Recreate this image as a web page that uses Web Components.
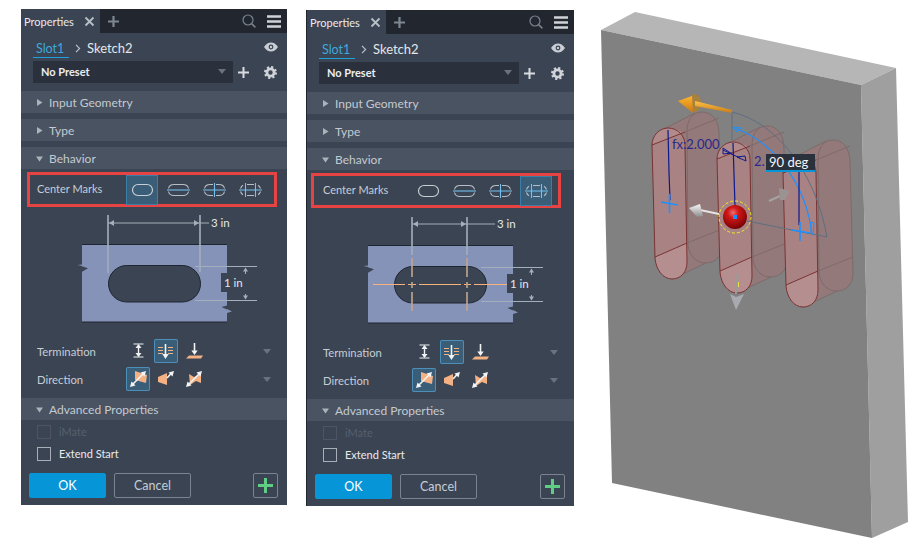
<!DOCTYPE html>
<html>
<head>
<meta charset="utf-8">
<style>
  html, body { margin: 0; background: #fff; }
  body { font-family: "Lato", "Liberation Sans", sans-serif; }
  .page { display: flex; align-items: flex-start; padding-left: 21px; width: 897px; height: 548px; overflow: hidden; }
</style>
</head>
<body>
<div class="page">
  <prop-panel style="width:266px;margin-top:9px">
    <tab-bar></tab-bar>
    <crumb-row></crumb-row>
    <preset-row></preset-row>
    <sect-head>Input Geometry</sect-head>
    <sect-head>Type</sect-head>
    <sect-head open>Behavior</sect-head>
    <mark-row selected="0"></mark-row>
    <slot-figure></slot-figure>
    <icon-row label="Termination" kind="term" selected="1"></icon-row>
    <icon-row label="Direction" kind="dir" selected="0"></icon-row>
    <sect-head open style="margin-top:3px">Advanced Properties</sect-head>
    <check-row disabled>iMate</check-row>
    <check-row>Extend Start</check-row>
    <foot-bar></foot-bar>
  </prop-panel>
  <prop-panel style="width:268px;margin:10px 0 0 19px;border-left:1px solid #20252d;box-sizing:border-box;--mark-shift:-2px;">
    <tab-bar></tab-bar>
    <crumb-row></crumb-row>
    <preset-row></preset-row>
    <sect-head>Input Geometry</sect-head>
    <sect-head>Type</sect-head>
    <sect-head open>Behavior</sect-head>
    <mark-row selected="3"></mark-row>
    <slot-figure marks></slot-figure>
    <icon-row label="Termination" kind="term" selected="1"></icon-row>
    <icon-row label="Direction" kind="dir" selected="0"></icon-row>
    <sect-head open style="margin-top:3px">Advanced Properties</sect-head>
    <check-row disabled>iMate</check-row>
    <check-row>Extend Start</check-row>
    <foot-bar></foot-bar>
  </prop-panel>
  <model-view></model-view>
</div>

<script>
  const PLUS = (c, w) => `<path d="M6.5 1v11M1 6.5h11" stroke="${c}" stroke-width="${w}" fill="none"/>`;

  class PropPanel extends HTMLElement {
    constructor() {
      super();
      this.attachShadow({ mode: 'open' });
      this.shadowRoot.innerHTML = `
        <style>
          :host {
            display: flex;
            flex-direction: column;
            flex: none;
            height: 496px;
            background: #3b4453;
            color: #c6cdd5;
            font: 12px "Lato", "Liberation Sans", sans-serif;
          }
          ::slotted(*) { flex: none; }
        </style>
        <slot></slot>`;
    }
  }

  class TabBar extends HTMLElement {
    constructor() {
      super();
      this.attachShadow({ mode: 'open' });
      this.shadowRoot.innerHTML = `
        <style>
          :host { display: flex; align-items: center; height: 24px; background: #22272f; }
          .tab { display: flex; align-items: center; width: 79px; height: 100%; background: #3b4453; box-sizing: border-box; padding-left: 3px; color: #e8ebee; font-size: 11px; }
          .tab svg { margin-left: 10px; }
          .add { margin-left: 7px; }
          .right { margin-left: auto; display: flex; align-items: center; gap: 11px; padding-right: 6px; }
          svg { display: block; }
        </style>
        <div class="tab">Properties
          <svg width="11" height="11" viewBox="0 0 11 11"><path d="M1.5 1.5l8 8M9.5 1.5l-8 8" stroke="#b9bfc7" stroke-width="1.8"/></svg>
        </div>
        <svg class="add" width="13" height="13" viewBox="0 0 13 13">${PLUS('#7d8692', 2.2)}</svg>
        <div class="right">
          <svg width="14" height="14" viewBox="0 0 14 14"><circle cx="6" cy="6" r="5" fill="none" stroke="#7b838e" stroke-width="1.2"/><path d="M9.6 9.6l3.8 3.8" stroke="#7b838e" stroke-width="1.5"/></svg>
          <svg width="14" height="13" viewBox="0 0 14 13"><path d="M0 1.5h14M0 6.5h14M0 11.5h14" stroke="#cfd3d8" stroke-width="2.4"/></svg>
        </div>`;
    }
  }

  class CrumbRow extends HTMLElement {
    constructor() {
      super();
      this.attachShadow({ mode: 'open' });
      this.shadowRoot.innerHTML = `
        <style>
          :host { display: flex; align-items: center; height: 28px; padding-left: 12px; font-size: 12.5px; color: #e4e7ea; }
          .link { color: #3ea8dc; padding: 0 6px 0 3px; width: 27px; border-bottom: 1px solid #1fa0de; line-height: 16px; margin-top: 4px; }
          svg { display: block; }
          .sep { margin: 2px 6px 0 6px; }
          .now { font-size: 13px; margin-top: 2px; }
          .eye { margin-left: auto; margin-right: 9px; }
        </style>
        <span class="link">Slot1</span>
        <svg class="sep" width="6" height="9" viewBox="0 0 6 9"><path d="M1 .8l3.6 3.7L1 8.2" fill="none" stroke="#b9bfc7" stroke-width="1.2"/></svg>
        <span class="now">Sketch2</span>
        <svg class="eye" width="14" height="10" viewBox="0 0 14 10"><path d="M0 5C2 1.8 4.5.5 7 .5S12 1.8 14 5c-2 3.2-4.500 4.500-7 4.500S2 8.200 0 5z" fill="#c9ced4"/><circle cx="7" cy="5" r="2.400" fill="#3b4453"/><circle cx="7" cy="5" r="1.200" fill="#c9ced4"/></svg>`;
    }
  }

  class PresetRow extends HTMLElement {
    constructor() {
      super();
      this.attachShadow({ mode: 'open' });
      this.shadowRoot.innerHTML = `
        <style>
          :host { display: flex; align-items: center; height: 22px; padding-left: 12px; margin-bottom: 8px; }
          .sel { display: flex; align-items: center; width: 200px; height: 100%; box-sizing: border-box; padding: 0 7px 2px 8px; background: #2a303c; color: #eceef0; font-size: 11px; font-weight: 700; }
          .sel i { margin-left: auto; width: 0; height: 0; border: 4px solid transparent; border-top: 5px solid #69727f; border-bottom: 0; }
          svg { display: block; }
          .plus { margin-left: 4px; }
          .gear { margin-left: auto; margin-right: 10px; }
        </style>
        <div class="sel">No Preset<i></i></div>
        <svg class="plus" width="13" height="13" viewBox="0 0 13 13">${PLUS('#d8dbdf', 2)}</svg>
        <svg class="gear" width="13" height="13" viewBox="0 0 13 13"><circle cx="6.500" cy="6.500" r="3.600" fill="none" stroke="#d0d4d9" stroke-width="2.800"/><circle cx="6.500" cy="6.500" r="5.300" fill="none" stroke="#d0d4d9" stroke-width="2.400" stroke-dasharray="2.100 2.060"/></svg>`;
    }
  }

  class SectHead extends HTMLElement {
    constructor() {
      super();
      this.attachShadow({ mode: 'open' });
      const open = this.hasAttribute('open');
      this.shadowRoot.innerHTML = `
        <style>
          :host { display: flex; align-items: center; height: 22px; margin-bottom: 6px; background: #4a5361; padding-left: 15px; color: #c3cad2; font-size: 12px; }
          .arrow { width: 7px; margin-right: 6px; display: block; }
        </style>
        <svg class="arrow" width="7" height="7" viewBox="0 0 7 7"><path d="${open ? 'M0 1.500h7L3.500 6.500z' : 'M1 0l5.500 3.500L1 7z'}" fill="#aab2bb"/></svg>
        <slot></slot>`;
    }
  }

  class MarkRow extends HTMLElement {
    icon(n) {
      const g = '#b8bdc3', b = '#74c0ee';
      const shapes = [
        `<rect x="1.500" y="1.500" width="20" height="11" rx="5.500" fill="none" stroke="#c8cdd2" stroke-width="1.200"/>`,
        `<path d="M1.500 5.500C2 3 4 1.500 7 1.500h9c3 0 5 1.500 5.500 4M1.500 8.500C2 11 4 12.500 7 12.500h9c3 0 5-1.500 5.500-4" fill="none" stroke="${g}" stroke-width="1.100"/><path d="M0 7h23" stroke="${b}" stroke-width="1.100"/>`,
        `<path d="M1.500 5.500C2 3 4 1.500 7 1.500h3M1.500 8.500C2 11 4 12.500 7 12.500h3M13 1.500h3c3 0 5 1.500 5.500 4M13 12.500h3c3 0 5-1.500 5.500-4" fill="none" stroke="${g}" stroke-width="1.100"/><path d="M0 7h23M11.500 0v14" stroke="${b}" stroke-width="1.100"/>`,
        `<path d="M1.500 5.500C2 4 3 2.800 4 2.200M1.500 8.500C2 10 3 11.200 4 11.800M8 1.500h7M8 12.500h7M19 2.200c1 .6 2 1.800 2.500 3.300M19 11.800c1-.6 2-1.800 2.500-3.300" fill="none" stroke="${g}" stroke-width="1.100"/><path d="M0 7h23M6.500 0v14M16.500 0v14" stroke="${b}" stroke-width="1.100"/>`
      ];
      return `<svg width="23" height="14" viewBox="0 0 23 14">${shapes[n]}</svg>`;
    }
    constructor() {
      super();
      this.attachShadow({ mode: 'open' });
      const sel = Number(this.getAttribute('selected'));
      const btns = [0, 1, 2, 3].map(i => `<div class="b ${i === sel ? 'on' : ''}">${this.icon(i)}</div>`).join('');
      this.shadowRoot.innerHTML = `
        <style>
          :host { display: flex; align-items: center; height: 35px; width: 250px; box-sizing: border-box; margin: -3px 0 0 calc(6px + var(--mark-shift, 0px)); border: 3px solid #e84343; padding-left: calc(7px - var(--mark-shift, 0px)); font-size: 11px; color: #c6cdd5; }
          .lbl { width: 89px; flex: none; margin-top: -2px; }
          .row { display: flex; height: 30px; }
          .b { width: 32px; margin-right: 4px; height: 100%; box-sizing: border-box; display: flex; align-items: center; justify-content: center; flex: none; }
          .b.on { background: #3a5d78; box-shadow: inset 0 0 0 1px #3d7ea8; }
          svg { display: block; }
        </style>
        <span class="lbl">Center Marks</span>
        <div class="row">${btns}</div>`;
    }
  }

  class SlotFigure extends HTMLElement {
    constructor() {
      super();
      this.attachShadow({ mode: 'open' });
      const marks = this.hasAttribute('marks');
      const x1 = marks ? 126 : 108, x2 = marks ? 181 : 200;
      const dk = '#1f2530', ln = '#a3afba';
      const extra = marks ? `
        <path d="M87 283.500h32M122 283.500h8M133 283.500h42M178 283.500h7M188 283.500h33" stroke="#f5b27c" stroke-width="1"/>
        <path d="M${x1} 257v19M${x1} 281v6M${x1} 291v19M${x2} 257v19M${x2} 281v6M${x2} 291v19" stroke="#c4a68e" stroke-width="1.600"/>` : '';
      this.shadowRoot.innerHTML = `
        <style>
          :host { display: block; height: 132px; }
          svg { display: block; }
          text { font: 11.500px "Lato", "Liberation Sans", sans-serif; fill: #e4e8ec; }
        </style>
        <svg width="266" height="132" viewBox="21 207 266 132">
          <rect x="82" y="244.500" width="145" height="77.500" fill="#8593b8"/>
          <path d="M82 244.500h145M82 322h145" stroke="${dk}" stroke-width="1"/>
          <path d="M78 265L88 268.300L82 271.700V266z" fill="#3b4453"/>
          <path d="M82 264.500L77.500 265L82 266z" fill="#8593b8"/>
          <path d="M227 305.500L221.500 307L227 309.500z" fill="#3b4453"/>
          <path d="M227 309L232 311.500L227 313z" fill="#8593b8"/>
          <rect x="221" y="273" width="24" height="19" fill="#3b4453"/>
          <rect x="108.500" y="265.500" width="92" height="36.500" rx="18.250" fill="#3b4453" stroke="${dk}"/>
          ${extra}
          <g stroke="${ln}" fill="none">
            <path d="M${x1} ${marks ? '216v38' : '215v58'}M${x2} ${marks ? '216v38' : '215v57'}" stroke-width="2" opacity=".8"/>
            <path d="M${x1} 223H209" stroke-width="1"/>
            <path d="M195 266.500h62M195 300.500h62" stroke-width="1"/>
            <path d="M245.500 268v6M245.500 294v5" stroke-width="1"/>
          </g>
          <path d="M${x1 + 1} 223l5-3v6zM${x2 - 1} 223l-5-3v6zM245.500 267.500l-2.500 4h5zM245.500 299.500l-2.500-4h5z" fill="${ln}"/>
          <text x="211" y="227">3 in</text>
          <text x="224" y="287">1 in</text>
        </svg>`;
    }
  }

  class IconRow extends HTMLElement {
    glyph(kind, n) {
      const o = '#f3b184', w = '#f2f3f5';
      const arrow = (d, a) => `<path d="${d}" stroke="${w}" stroke-width="1.600" fill="none"/><path d="${a}" fill="${w}"/>`;
      if (kind === 'term') {
        return [
          `<path d="M7.500 5h10M7.500 18h10" stroke="${w}" stroke-width="1.200"/><path d="M12.500 6v11" stroke="${w}" stroke-width="1.400"/><path d="M12.500 5l3 4h-6zM12.500 18l3-4h-6z" fill="${w}"/>`,
          `<path d="M4 8.500h5M14 8.500h5M4 11.500h5M14 11.500h5M4 14.500h5M14 14.500h5" stroke="${o}" stroke-width="1.200"/><path d="M11.500 5v11" stroke="${w}" stroke-width="1.600"/><path d="M11.500 20l3.200-5h-6.400z" fill="${w}"/>`,
          `<path d="M12.500 4v9" stroke="${w}" stroke-width="1.600"/><path d="M12.500 16l3.200-4.500h-6.400z" fill="${w}"/><path d="M4 19.500L7 16.500H21L19 19.500z" fill="${o}"/>`
        ][n];
      }
      const two = arrow('M5.500 18.500L18 6', 'M4 20l1.500-5.500 4 4zM20 4l-1.500 5.500-4-4z');
      return [
        `<path d="M9 4L21 8L20 16L9 13z" fill="${o}"/>` + two,
        `<path d="M4 10L13 6V18L4 15z" fill="${o}"/>` + arrow('M13 11L18 5.500', 'M20 4l-1.500 5.500-4-4z'),
        `<path d="M7 7L12 10L19 7V16L14 14L8 18z" fill="${o}"/>` + two
      ][n];
    }
    constructor() {
      super();
      this.attachShadow({ mode: 'open' });
      const kind = this.getAttribute('kind');
      const sel = Number(this.getAttribute('selected'));
      const btns = [0, 1, 2].map(i => `<div class="b ${i === sel ? 'on' : ''}"><svg width="24" height="24" viewBox="0 0 24 24">${this.glyph(kind, i)}</svg></div>`).join('');
      this.shadowRoot.innerHTML = `
        <style>
          :host { display: flex; align-items: center; height: 24px; padding-left: 16px; margin-bottom: 4px; font-size: 11.300px; color: #c6cdd5; }
          .lbl { width: 89px; flex: none; }
          .row { display: flex; gap: 4px; }
          .b { width: 24px; height: 24px; border-radius: 2px; flex: none; }
          .b.on { background: #3a5d78; box-shadow: inset 0 0 0 1px #4d8fb8; }
          svg { display: block; }
          i { margin-left: auto; margin-right: 16px; width: 0; height: 0; border: 4px solid transparent; border-top: 5px solid #69727f; border-bottom: 0; }
        </style>
        <span class="lbl">${this.getAttribute('label')}</span>
        <div class="row">${btns}</div>
        <i></i>`;
    }
  }

  class CheckRow extends HTMLElement {
    constructor() {
      super();
      this.attachShadow({ mode: 'open' });
      this.shadowRoot.innerHTML = `
        <style>
          :host { display: flex; align-items: center; height: 14px; padding-left: 16px; margin-top: 8px; font-size: 11px; color: #e8ebee; }
          :host([disabled]) { margin-top: -1px; color: #566070; }
          .box { width: 14px; height: 14px; box-sizing: border-box; border: 1px solid #a8afb8; margin-right: 8px; }
          .txt { margin-top: -2px; }
          :host([disabled]) .box { border-color: #4c5564; }
        </style>
        <span class="box"></span><span class="txt"><slot></slot></span>`;
    }
  }

  class FootBar extends HTMLElement {
    constructor() {
      super();
      this.attachShadow({ mode: 'open' });
      this.shadowRoot.innerHTML = `
        <style>
          :host { display: flex; height: 25px; margin-top: 12px; padding: 0 9px 0 8px; gap: 8px; }
          .btn { width: 77px; box-sizing: border-box; display: flex; align-items: center; justify-content: center; border-radius: 2px; font-size: 12.500px; border: 1px solid #7a838f; color: #c6cdd5; }
          .ok { background: #0696d7; border-color: #0696d7; color: #fff; }
          .add { margin-left: auto; width: 25px; box-sizing: border-box; border: 1px solid #7a838f; border-radius: 2px; display: flex; align-items: center; justify-content: center; }
          svg { display: block; }
        </style>
        <div class="btn ok">OK</div>
        <div class="btn">Cancel</div>
        <div class="add"><svg width="15" height="15" viewBox="0 0 15 15"><path d="M7.500 0v15M0 7.500h15" stroke="#5fce84" stroke-width="3"/></svg></div>`;
    }
  }

  class ModelView extends HTMLElement {
    slotShape() {
      const edge = '#7a3333', faint = '#7e6a6a';
      const front = 'M652 145C652 135 660 128 668 128C677 128 685 135 685 145L687 262C687 272 681 279 672 279C663 279 656 270 655 258Z';
      const back = 'M687 132C687 120 692 112 702 112C712 112 719 120 719 135L722 245C722 256 716 263 705 263C696 263 689 255 688 245Z';
      return `
        <path d="M660 131L695 113L719 135L722 245L706 263L672 279Z" fill="#94797a"/>
        <path d="${back}" fill="#94797a" stroke="${faint}"/>
        <path d="M660 131L695 113M672 279L706 263" stroke="${faint}" fill="none"/>
        <path d="${front}" fill="#a98384"/>
        <path d="M652 145C652 135 660 128 668 128C677 128 685 135 685 132Z" fill="#b18b8c"/>
        <path d="M655 257L687 243L687 262C687 272 681 279 672 279C663 279 656 270 655 258Z" fill="#b58e8f"/>
        <path d="${front}" fill="none" stroke="${edge}" stroke-width="1"/>
        <path d="M652 145L685 132M655 257L687 243" stroke="${edge}" stroke-width="1" fill="none"/>
        <path d="M685 132L719 118M687 243L722 229" stroke="${faint}" stroke-width="1" fill="none"/>`;
    }
    constructor() {
      super();
      this.attachShadow({ mode: 'open' });
      const nav = '#0c1a8c', sky = '#1e90ff', gray = '#5e6e80';
      this.shadowRoot.innerHTML = `
        <style>
          :host { display: block; flex: none; width: 323px; height: 548px; margin-left: 21px; }
          svg { display: block; }
          .dim { font: 13px "Lato", "Liberation Sans", sans-serif; fill: #28288a; }
          .tip { font: 13px "Lato", "Liberation Sans", sans-serif; fill: #f4f6f8; }
        </style>
        <svg width="323" height="548" viewBox="595 0 323 548">
          <defs>
            <radialGradient id="ball" cx=".42" cy=".32" r=".75"><stop offset="0" stop-color="#f07070"/><stop offset=".3" stop-color="#d01818"/><stop offset=".8" stop-color="#8a0606"/><stop offset="1" stop-color="#5a0404"/></radialGradient>
            <linearGradient id="shaft" x1="0" y1="0" x2="0" y2="1"><stop offset="0" stop-color="#ffc24a"/><stop offset="1" stop-color="#c87c14"/></linearGradient>
            <linearGradient id="tip" x1="0" y1="0" x2="0" y2="1"><stop offset="0" stop-color="#ffb52e"/><stop offset="1" stop-color="#c9770f"/></linearGradient>
            <linearGradient id="cone" x1="0" y1="0" x2="0" y2="1"><stop offset="0" stop-color="#f7f7f7"/><stop offset="1" stop-color="#8d8d8d"/></linearGradient>
          </defs>
          <polygon points="601,30 635,12 896,68 861,85" fill="#b6b6b6"/>
          <polygon points="861,85 896,68 908,522 872,538" fill="#9f9f9f"/>
          <polygon points="601,30 861,85 872,538 612,483" fill="#818181"/>

          ${this.slotShape()}
          <g transform="translate(65 14)">${this.slotShape()}</g>
          <g transform="translate(131 28)">${this.slotShape()}</g>

          <path d="M732 112C775 122 815 170 827 237L747 221M732 112V140" fill="none" stroke="${gray}" stroke-width="1"/>
          <path d="M734 128C770 140 806 180 812 235" fill="none" stroke="${sky}" stroke-width="1.200"/>
          <path d="M733 127l8 1-4 4zM811 222l3 1-1 11-2-1z" fill="none" stroke="${sky}"/>

          <path d="M668 130L669 172L670 200M733 143L735 206M799 172L799 225" fill="none" stroke="${nav}" stroke-width="1.200"/>
          <path d="M723 150l17 8M723 148l9 6M723 148v6l9-1M737 157l8-1 1 5z" fill="none" stroke="${nav}" stroke-width="1"/>
          <path d="M661 202L678 205M669.500 194V213M792 230L810 233M800 222V241" fill="none" stroke="${sky}" stroke-width="1.600"/>
          <text class="dim" x="672" y="149">fx:2.000</text>
          <text class="dim" x="754" y="166">2.</text>

          <ellipse cx="695" cy="103" rx="6" ry="9" fill="#a8813c"/>
          <path d="M678 101L692 96L693 113Z" fill="url(#tip)"/>
          <path d="M695 101L732 110V113L695 106Z" fill="url(#shaft)"/>

          <path d="M719 214L700 210" stroke="#e4e4e4" stroke-width="2"/>
          <path d="M689 208L700 204L703 216L697 217Z" fill="url(#cone)"/>
          <path d="M769 201L780 196" stroke="#a4a4a4" stroke-width="2"/>
          <path d="M790 191L779 188L780 200L785 200Z" fill="#9b9292"/>
          <path d="M736 274V294" stroke="#9a9a9a" stroke-width="2"/>
          <path d="M736 310L730 294L736 297L744 294Z" fill="#a8aab0"/>
          <path d="M738.500 282v5" stroke="#f0e040" stroke-width="1"/>

          <circle cx="735" cy="217" r="12" fill="url(#ball)"/>
          <circle cx="735" cy="217" r="16" fill="none" stroke="#f5ee20" stroke-width="1" stroke-dasharray="3 2"/>
          <rect x="733" y="215" width="4" height="4" fill="#1e90ff"/>

          <rect x="766" y="154" width="49" height="18" fill="#2a303c"/>
          <rect x="766" y="170" width="49" height="2" fill="#0696d7"/>
          <text class="tip" x="769" y="167">90 deg</text>
        </svg>`;
    }
  }

  customElements.define('prop-panel', PropPanel);
  customElements.define('tab-bar', TabBar);
  customElements.define('crumb-row', CrumbRow);
  customElements.define('preset-row', PresetRow);
  customElements.define('sect-head', SectHead);
  customElements.define('mark-row', MarkRow);
  customElements.define('slot-figure', SlotFigure);
  customElements.define('icon-row', IconRow);
  customElements.define('check-row', CheckRow);
  customElements.define('foot-bar', FootBar);
  customElements.define('model-view', ModelView);
</script>
</body>
</html>
